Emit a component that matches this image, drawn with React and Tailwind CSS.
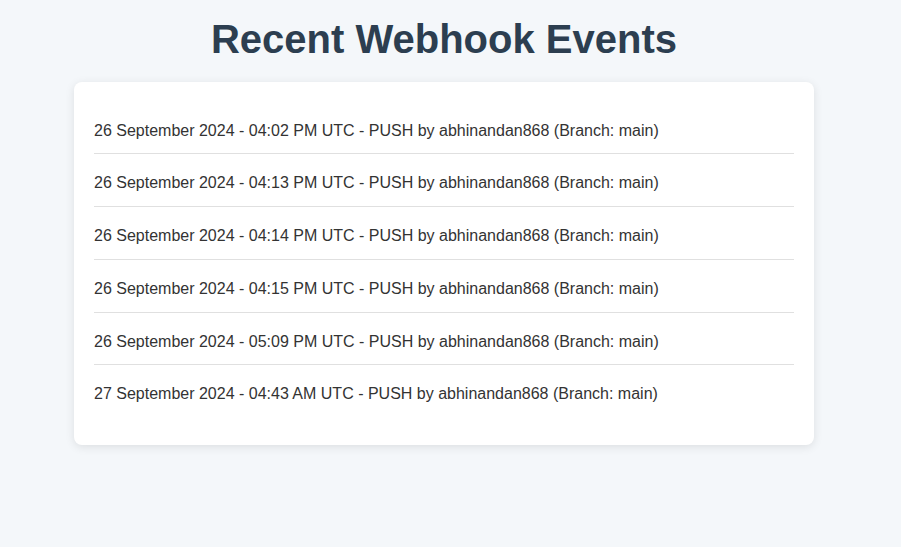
import React from "react";

const events = [
  "26 September 2024 - 04:02 PM UTC - PUSH by abhinandan868 (Branch: main)",
  "26 September 2024 - 04:13 PM UTC - PUSH by abhinandan868 (Branch: main)",
  "26 September 2024 - 04:14 PM UTC - PUSH by abhinandan868 (Branch: main)",
  "26 September 2024 - 04:15 PM UTC - PUSH by abhinandan868 (Branch: main)",
  "26 September 2024 - 05:09 PM UTC - PUSH by abhinandan868 (Branch: main)",
  "27 September 2024 - 04:43 AM UTC - PUSH by abhinandan868 (Branch: main)",
];

const App = () => {
  return (
    <div
      className="min-h-screen bg-[#f4f7fa] pt-[17px]"
      style={{ fontFamily: '"Liberation Sans", Arial, sans-serif' }}
    >
      <div className="w-[888px]">
        <h1 className="text-center text-[40px] leading-[45px] font-bold text-[#2c3e50] mb-5">
          Recent Webhook Events
        </h1>
        <div className="mx-auto w-[740px] bg-white rounded-lg shadow-[0_2px_10px_rgba(0,0,0,0.1)] px-5 pt-[19.5px] pb-[28px]">
          <ul>
            {events.map((e, i) => (
              <li
                key={i}
                className={`pt-[19px] pb-[13px] text-base leading-[19.75px] text-[#333333] ${
                  i < events.length - 1 ? "border-b border-[#e0e0e0]" : ""
                }`}
              >
                {e}
              </li>
            ))}
          </ul>
        </div>
      </div>
    </div>
  );
};

export default App;
